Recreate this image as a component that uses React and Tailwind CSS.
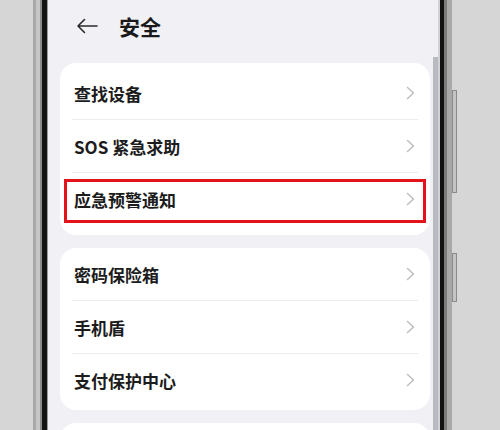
import React from 'react';

const groups = [
  { pad: 'pt-[4px] pb-[10px]', items: ['查找设备', 'SOS 紧急求助', '应急预警通知'] },
  { pad: 'pt-0 pb-[4px]', items: ['密码保险箱', '手机盾', '支付保护中心'] },
];

function Chevron() {
  return (
    <svg width="9" height="14" viewBox="0 0 9 14" fill="none">
      <path d="M1.5 1.5 L7.5 7 L1.5 12.5" stroke="#bcbcbc" strokeWidth="1.4" strokeLinecap="round" strokeLinejoin="round" />
    </svg>
  );
}

function Row({ label, highlight, last }) {
  return (
    <div className="relative">
      <div className="h-[52px] flex items-center justify-between pl-[14px] pr-[15px]">
        <span className="text-[17px] font-bold text-[#1c1c1c] leading-none">{label}</span>
        <Chevron />
      </div>
      {!last && <div className="mx-[12px] h-px bg-[#ececef]" />}
      {highlight && (
        <div className="absolute left-[4px] right-[4px] top-[6px] bottom-[2px] border-[3px] border-[#e3121b]" />
      )}
    </div>
  );
}

export default function App() {
  return (
    <div
      className="w-[500px] h-[430px] overflow-hidden flex bg-[#d5d5d5]"
      style={{ fontFamily: '"Noto Sans CJK SC", "Noto Sans", sans-serif' }}
    >
      {/* left bezel */}
      <div className="w-[33px] bg-[#d6d6d6]" />
      <div className="w-[3px] bg-[#a9a9a9]" />
      <div className="w-[4px] bg-[#c6c6c6]" />
      <div className="w-[2px] bg-[#8c8c8c]" />
      <div className="w-[5px] bg-[#141414]" />
      <div className="w-[1px] bg-[#9c9c9c]" />

      {/* screen */}
      <div className="w-[385px] shrink-0 bg-[#f1f1f5] pl-[12px] pr-[3px] overflow-hidden">
        <div className="h-[52px] flex items-center pl-[16px] gap-[21px]">
          <svg width="22" height="16" viewBox="0 0 22 16" fill="none">
            <path d="M21 8 H2 M8.5 1.5 L2 8 L8.5 14.5" stroke="#2a2a2a" strokeWidth="1.6" strokeLinecap="round" strokeLinejoin="round" />
          </svg>
          <span className="text-[21px] font-bold text-[#1a1a1a] leading-none">安全</span>
        </div>

        <div className="mt-[11px] flex flex-col gap-[13px]">
          {groups.map((g, gi) => (
            <div key={gi} className={`bg-white rounded-[16px] ${g.pad}`}>
              {g.items.map((label, i) => (
                <Row
                  key={label}
                  label={label}
                  last={i === g.items.length - 1}
                  highlight={label === '应急预警通知'}
                />
              ))}
            </div>
          ))}
          <div className="bg-white rounded-[16px] h-[40px]" />
        </div>
      </div>

      {/* right bezel */}
      <div className="w-[5px] flex flex-col">
        <div className="h-[57px] bg-[#f1f1f5]" />
        <div className="flex-1 bg-[#b9bac1]" />
      </div>
      <div className="w-[2px] bg-[#d2d2d6]" />
      <div className="w-[4px] bg-[#121212]" />
      <div className="w-[3px] bg-[#7c7c7c]" />
      <div className="w-[5px] bg-[#a8a8a8]" />

      <div className="flex-1 bg-[#d6d6d6] flex flex-col">
        <div className="mt-[90px] w-[5px] h-[103px] border border-[#8a8a8a] bg-[#c4c4c4]" />
        <div className="mt-[60px] w-[5px] h-[49px] border border-[#8a8a8a] bg-[#c4c4c4]" />
      </div>
    </div>
  );
}
